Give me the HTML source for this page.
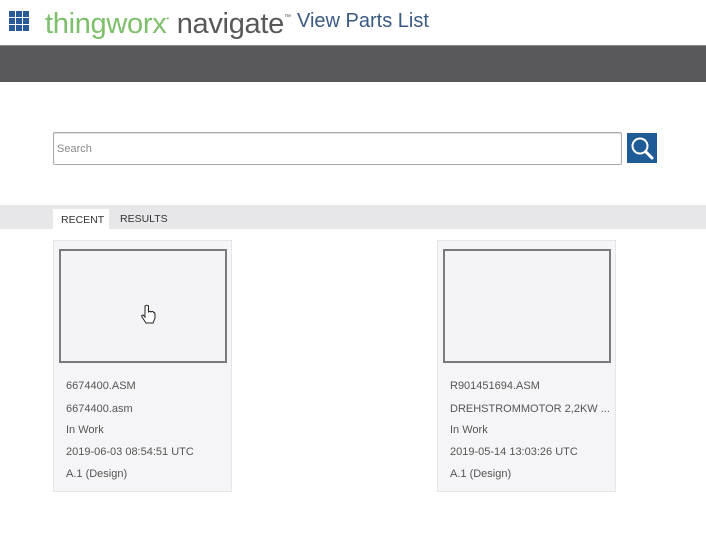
<!DOCTYPE html>
<html><head><meta charset="utf-8"><style>
*{margin:0;padding:0;box-sizing:border-box}
body{width:706px;height:540px;background:#fff;font-family:"Liberation Sans",sans-serif;position:relative;overflow:hidden}
.abs{position:absolute}
.grid{left:9px;top:11px;width:20px;height:20px;display:grid;grid-template-columns:repeat(3,6px);grid-template-rows:repeat(3,6px);gap:1px}
.grid div{background:#2a5a98}
.card{background:#f5f5f7;border:1px solid #e6e6e8;width:179px;height:252px}
.thumb{position:absolute;left:5px;top:8px;width:168px;height:114px;border:2px solid #7a7a7a;background:#f4f4f6}
.card p{position:absolute;left:12px;font-size:11px;color:#555;white-space:nowrap}
</style></head><body>
<div class="grid abs"><div></div><div></div><div></div><div></div><div></div><div></div><div></div><div></div><div></div></div>
<div class="abs" style="left:45px;top:0px;font-size:29px;line-height:36px;white-space:nowrap;letter-spacing:-0.3px">
<span style="color:#7dbf6b">thingworx</span><span style="color:#7dbf6b;font-size:8px;vertical-align:12px">•</span> <span style="color:#58585a">navigate</span><span style="color:#58585a;font-size:7px;vertical-align:14px">™</span></div>
<div class="abs" style="left:297px;top:10px;font-size:20px;color:#3a5a82;white-space:nowrap">View Parts List</div>
<div class="abs" style="left:0;top:45px;width:706px;height:37px;background:#59595b;border-top:1px solid #888"></div>
<div class="abs" style="left:53px;top:132px;width:569px;height:33px;border:1px solid #aaa;border-radius:2px;box-shadow:inset 0 1px 1px #ddd"></div>
<div class="abs" style="left:57px;top:143px;font-size:11px;color:#8a8a8a">Search</div>
<div class="abs" style="left:627px;top:133px;width:30px;height:30px;background:#1f5b97">
<svg width="30" height="30"><circle cx="13" cy="13" r="7.5" fill="none" stroke="#fff" stroke-width="2"/><line x1="18.5" y1="18.5" x2="25" y2="25" stroke="#fff" stroke-width="3" stroke-linecap="round"/></svg></div>
<div class="abs" style="left:0;top:205px;width:706px;height:24px;background:#e7e7e9"></div>
<div class="abs" style="left:53px;top:209px;width:56px;height:20px;background:#fff"></div>
<div class="abs" style="left:61px;top:214px;font-size:10.5px;color:#333">RECENT</div>
<div class="abs" style="left:120px;top:213px;font-size:10.5px;color:#333">RESULTS</div>
<div class="abs card" style="left:53px;top:240px"><div class="thumb"></div>
<p style="top:139px">6674400.ASM</p><p style="top:162px">6674400.asm</p><p style="top:183px">In Work</p><p style="top:205px">2019-06-03 08:54:51 UTC</p><p style="top:227px">A.1 (Design)</p></div>
<div class="abs card" style="left:437px;top:240px"><div class="thumb"></div>
<p style="top:139px">R901451694.ASM</p><p style="top:162px">DREHSTROMMOTOR 2,2KW ...</p><p style="top:183px">In Work</p><p style="top:205px">2019-05-14 13:03:26 UTC</p><p style="top:227px">A.1 (Design)</p></div>
<svg class="abs" style="left:140px;top:304px" width="18" height="22"><path d="M5 2 v11 l-2-2 q-2 0-1 2 l4 6 h7 l2-5 v-4 q0-1.5-1.5-1.5 v-0.5 q-1.5-1.2-2.5 0 q-1-1.2-2.5 0 V2 q-1.5-1.5-3 0z" fill="#fff" stroke="#222" stroke-width="1"/></svg>
</body></html>
